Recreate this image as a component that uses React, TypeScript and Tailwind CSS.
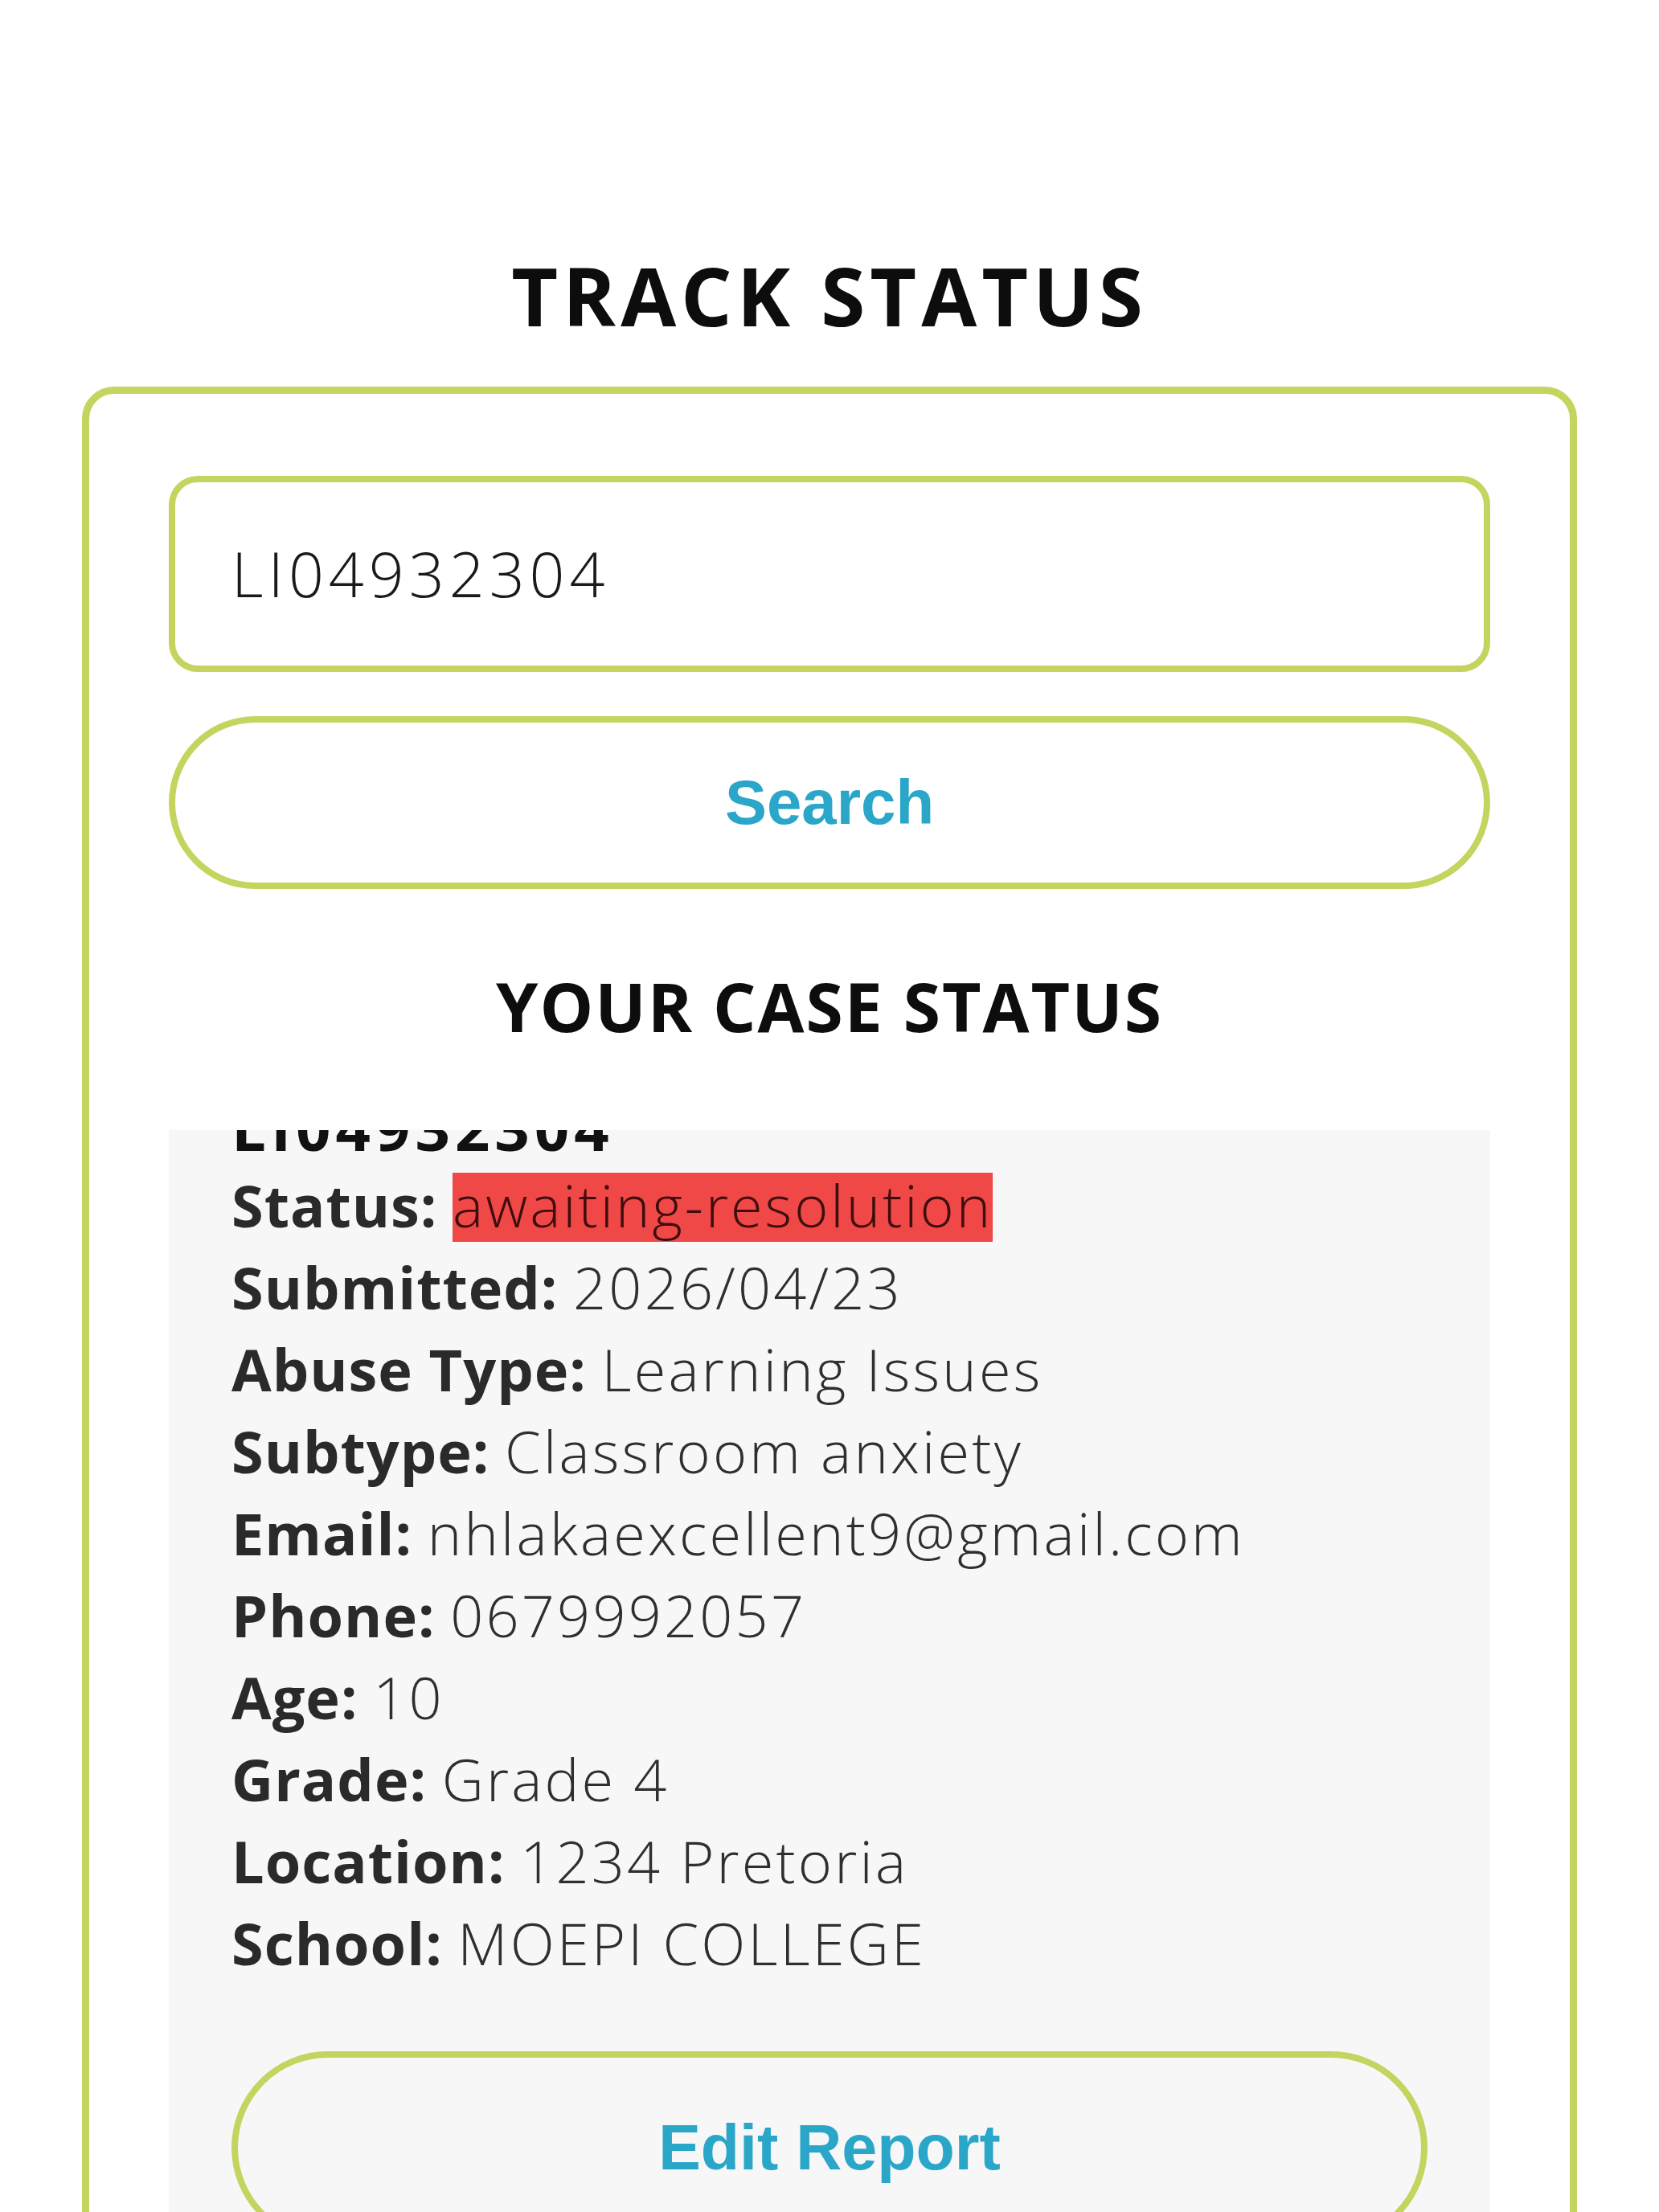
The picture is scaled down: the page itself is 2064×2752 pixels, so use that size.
import React from 'react';

type Row = {
	label: string;
	value: string;
	badge?: boolean;
};

const rows: Row[] = [
	{ label: 'Status:', value: 'awaiting-resolution', badge: true },
	{ label: 'Submitted:', value: '2026/04/23' },
	{ label: 'Abuse Type:', value: 'Learning Issues' },
	{ label: 'Subtype:', value: 'Classroom anxiety' },
	{ label: 'Email:', value: 'nhlakaexcellent9@gmail.com' },
	{ label: 'Phone:', value: '0679992057' },
	{ label: 'Age:', value: '10' },
	{ label: 'Grade:', value: 'Grade 4' },
	{ label: 'Location:', value: '1234 Pretoria' },
	{ label: 'School:', value: 'MOEPI COLLEGE' },
];

const CaseRow = ({ label, value, badge }: Row) => (
	<p className="text-[72px] leading-[102px] whitespace-nowrap">
		<span className="font-bold text-[#2a2a2a] tracking-[1px]">{label}</span>{' '}
		{badge ? (
			<span className="inline-block h-[86px] leading-[80px] bg-[#f04747] font-[350] text-[#3e0e0e] tracking-[3px]">
				{value}
			</span>
		) : (
			<span className="font-[350] text-[#2f2f2f] tracking-[3.2px]">{value}</span>
		)}
	</p>
);

const App = () => {
	return (
		<div className="h-[2752px] overflow-hidden bg-white font-['Open_Sans',sans-serif] pt-[317px]">
			<h1 className="text-center text-[100px] leading-[100px] font-bold text-[#0d0d0d] tracking-[6px]">
				TRACK STATUS
			</h1>

			<div className="mx-[102px] mt-[64px] rounded-[40px] border-[9px] border-[#c4d45e] bg-white px-[99px] pt-[102px]">
				<div className="flex h-[244px] items-center rounded-[36px] border-[8px] border-[#c4d45e] bg-white pl-[70px]">
					<input
						readOnly
						defaultValue="LI04932304"
						className="w-full bg-transparent text-[77px] font-light tracking-[6px] text-[#1a1a1a] outline-none"
					/>
				</div>

				<button className="mt-[55px] flex h-[215px] w-full items-center justify-center rounded-full border-[8px] border-[#c4d45e] bg-white font-['Liberation_Sans',Arial,sans-serif] text-[78px] font-bold text-[#2aa6c9]">
					Search
				</button>

				<h2 className="mt-[104px] text-center text-[84px] leading-[84px] font-bold text-[#0d0d0d] tracking-[2px]">
					YOUR CASE STATUS
				</h2>

				{/* details list, scrolled a little past the case number */}
				<div className="mt-[112px] h-[1400px] overflow-hidden bg-[#f7f7f7] px-[78px]">
					<h3 className="-mt-[48px] text-[76px] leading-[90px] font-bold text-[#111] tracking-[6px]">
						LI04932304
					</h3>
					{rows.map((r) => (
						<CaseRow key={r.label} {...r} />
					))}
					<button className="mt-[84px] flex h-[240px] w-full items-center justify-center rounded-full border-[8px] border-[#c4d45e] bg-[#f7f7f7] font-['Liberation_Sans',Arial,sans-serif] text-[79px] font-bold text-[#2aa6c9]">
						Edit Report
					</button>
				</div>
			</div>
		</div>
	);
};

export default App;
